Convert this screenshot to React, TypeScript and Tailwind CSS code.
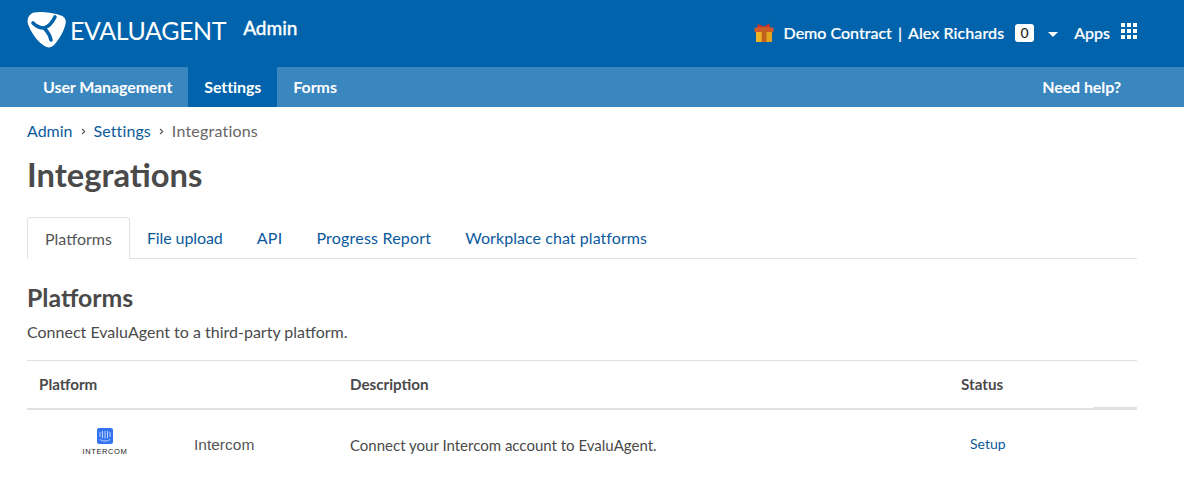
import { ChevronRight } from 'lucide-react';

const topNav = [
  { name: 'User Management', current: false },
  { name: 'Settings', current: true },
  { name: 'Forms', current: false },
];

const tabs = [
  { name: 'File upload', className: 'tracking-[-0.1px]' },
  { name: 'API', className: 'tracking-[0.3px]' },
  { name: 'Progress Report', className: 'tracking-[0.2px]' },
  { name: 'Workplace chat platforms', className: 'tracking-[0.06px]' },
];

function Logo() {
  return (
    <svg width="39" height="37" viewBox="0 0 39 37" className="block">
      <path
        d="M7 1.5 C14 0 26 1.5 34 4.5 C38 6 39.5 9 38.5 13 C37 20 32 29 27 34 C24 37 20.5 37 17.5 35 C11 31 4 22 1 13 C-0.5 8 2 3 7 1.5 Z"
        fill="#fff"
      />
      <path
        d="M17 17 C21 16 25 12 28 6 M17 17 C13 17 9 15 6 12 M17 17 C20 20 23 24 24 29"
        fill="none"
        stroke="#0063ab"
        strokeWidth="3.6"
        strokeLinecap="round"
      />
    </svg>
  );
}

function Gift() {
  return (
    <svg width="20" height="20" viewBox="0 0 20 20" className="block">
      <path d="M4 1 L10 3.5 L15 0.5 L16.5 5 L3 5 Z" fill="#c8352b" />
      <rect x="0.5" y="4.5" width="19" height="5" rx="1" fill="#cf5a2a" />
      <rect x="2" y="9" width="16" height="10" fill="#e2a41f" />
      <rect x="7.5" y="4" width="5" height="15" fill="#c2611f" />
      <rect x="2" y="9" width="5.5" height="10" fill="#eeb323" />
    </svg>
  );
}

function Grid() {
  return (
    <div className="grid grid-cols-3 gap-[2px] w-4 mb-[4px]">
      {Array.from({ length: 9 }).map((_, i) => (
        <span key={i} className="w-[4px] h-[4px] bg-white" />
      ))}
    </div>
  );
}

function IntercomLogo() {
  return (
    <div className="flex flex-col items-center w-[156px] pb-[5px]">
      <svg width="16" height="16" viewBox="0 0 16 16" className="block">
        <rect width="16" height="16" rx="2" fill="#3574f0" />
        <path d="M3 4v5M5.5 3v7M8 3v7.5M10.5 3v7M13 4v5" stroke="#cfe0ff" strokeWidth="0.9" />
        <path d="M3 11.5 C6 13.5 10 13.5 13 11.5" stroke="#cfe0ff" strokeWidth="0.9" fill="none" />
      </svg>
      <span className="mt-[3px] text-[7.5px] leading-[10px] tracking-[0.6px] text-[#222] font-['Liberation_Sans',sans-serif]">
        INTERCOM
      </span>
    </div>
  );
}

export default function App() {
  return (
    <div className="h-[489px] overflow-hidden bg-white text-[16px] text-[#4a4a4a] font-['Lato',sans-serif]">
      {/* Header */}
      <header className="h-[67px] bg-[#0063ab] text-white flex items-start justify-between pl-[27px] pr-[47px]">
        <div className="flex items-center pt-[11px]">
          <Logo />
          <span className="ml-[4px] text-[25px] leading-[36px] tracking-[-0.4px]">EVALUAGENT</span>
          <span className="ml-[17px] mb-[3px] text-[19px] leading-[24px] font-medium [-webkit-text-stroke:0.3px_white]">Admin</span>
        </div>
        <div className="flex items-center pt-[21px] text-[16px] leading-[24px] font-medium [-webkit-text-stroke:0.2px_white]">
          <Gift />
          <span className="ml-[10px]">Demo Contract</span>
          <span className="ml-[6px]">|</span>
          <span className="ml-[6px] tracking-[0.08px]">Alex Richards</span>
          <span className="ml-[11px] w-[19px] h-[18px] rounded-[3px] bg-white text-[#222] text-[14px] leading-[18px] text-center [-webkit-text-stroke:0]">0</span>
          <span className="ml-[14px] mt-[2px] w-0 h-0 border-x-[5px] border-x-transparent border-t-[5px] border-t-white" />
          <span className="ml-[16px]">Apps</span>
          <span className="ml-[11px]"><Grid /></span>
        </div>
      </header>

      {/* Top navigation */}
      <nav className="h-[40px] bg-[#3a86bf] text-white flex items-stretch justify-between pl-[27px] pr-[47px] text-[16px] font-bold tracking-[-0.08px]">
        <div className="flex">
          {topNav.map((item) => (
            <a key={item.name} className={`px-[16px] leading-[40px] ${item.current ? 'bg-[#0063ab]' : ''}`}>
              {item.name}
            </a>
          ))}
        </div>
        <a className="pr-[16px] leading-[40px]">Need help?</a>
      </nav>

      <main className="px-[27px] w-[1137px] box-content">
        {/* Breadcrumbs */}
        <div className="flex items-center pt-[12px] h-[36px] leading-[24px] text-[16px]">
          <a className="text-[#0b5a9c]">Admin</a>
          <ChevronRight strokeWidth={3} className="mx-[6px] w-[9px] h-[9px] text-[#555]" />
          <a className="text-[#0b5a9c] tracking-[0.1px]">Settings</a>
          <ChevronRight strokeWidth={3} className="mx-[6px] w-[9px] h-[9px] text-[#555]" />
          <span className="text-[#666] tracking-[0.2px]">Integrations</span>
        </div>

        <h1 className="mt-[12px] text-[32.7px] leading-[40px] font-bold text-[#4a4a4a]">Integrations</h1>

        {/* Tabs */}
        <div className="mt-[22px] flex h-[42px] border-b border-[#dfe1e5] w-[1110px] text-[16px]">
          <div className="px-[17px] h-[42px] leading-[42px] border border-b-0 border-[#dfe1e5] rounded-t-[4px] bg-white text-[#555]">
            Platforms
          </div>
          {tabs.map((tab) => (
            <a key={tab.name} className={`px-[17px] leading-[42px] text-[#0b5a9c] ${tab.className}`}>
              {tab.name}
            </a>
          ))}
        </div>

        <h2 className="mt-[24px] text-[24.8px] leading-[30px] font-bold text-[#4a4a4a]">Platforms</h2>
        <p className="mt-[8px] text-[16px] leading-[22px]">Connect EvaluAgent to a third-party platform.</p>

        {/* Table */}
        <div className="mt-[17px] w-[1110px]">
          <div className="relative grid grid-cols-[323px_611px_1fr] h-[50px] items-center border-t border-[#dfe1e5] border-b-2 font-bold text-[15.2px]">
            <span className="pl-[12px]">Platform</span>
            <span>Description</span>
            <span>Status</span>
            <span className="absolute right-0 -bottom-[2px] w-[44px] h-[3px] bg-[#dfe1e5]" />
          </div>
          <div className="grid grid-cols-[167px_156px_611px_1fr] items-center h-[70px]">
            <IntercomLogo />
            <span className="text-[15.5px] text-[#555] font-['Liberation_Sans',sans-serif]">Intercom</span>
            <span className="text-[15px]">Connect your Intercom account to EvaluAgent.</span>
            <a className="pl-[9px] pb-[4px] text-[14px] text-[#0b5a9c]">Setup</a>
          </div>
        </div>
      </main>
    </div>
  );
}
